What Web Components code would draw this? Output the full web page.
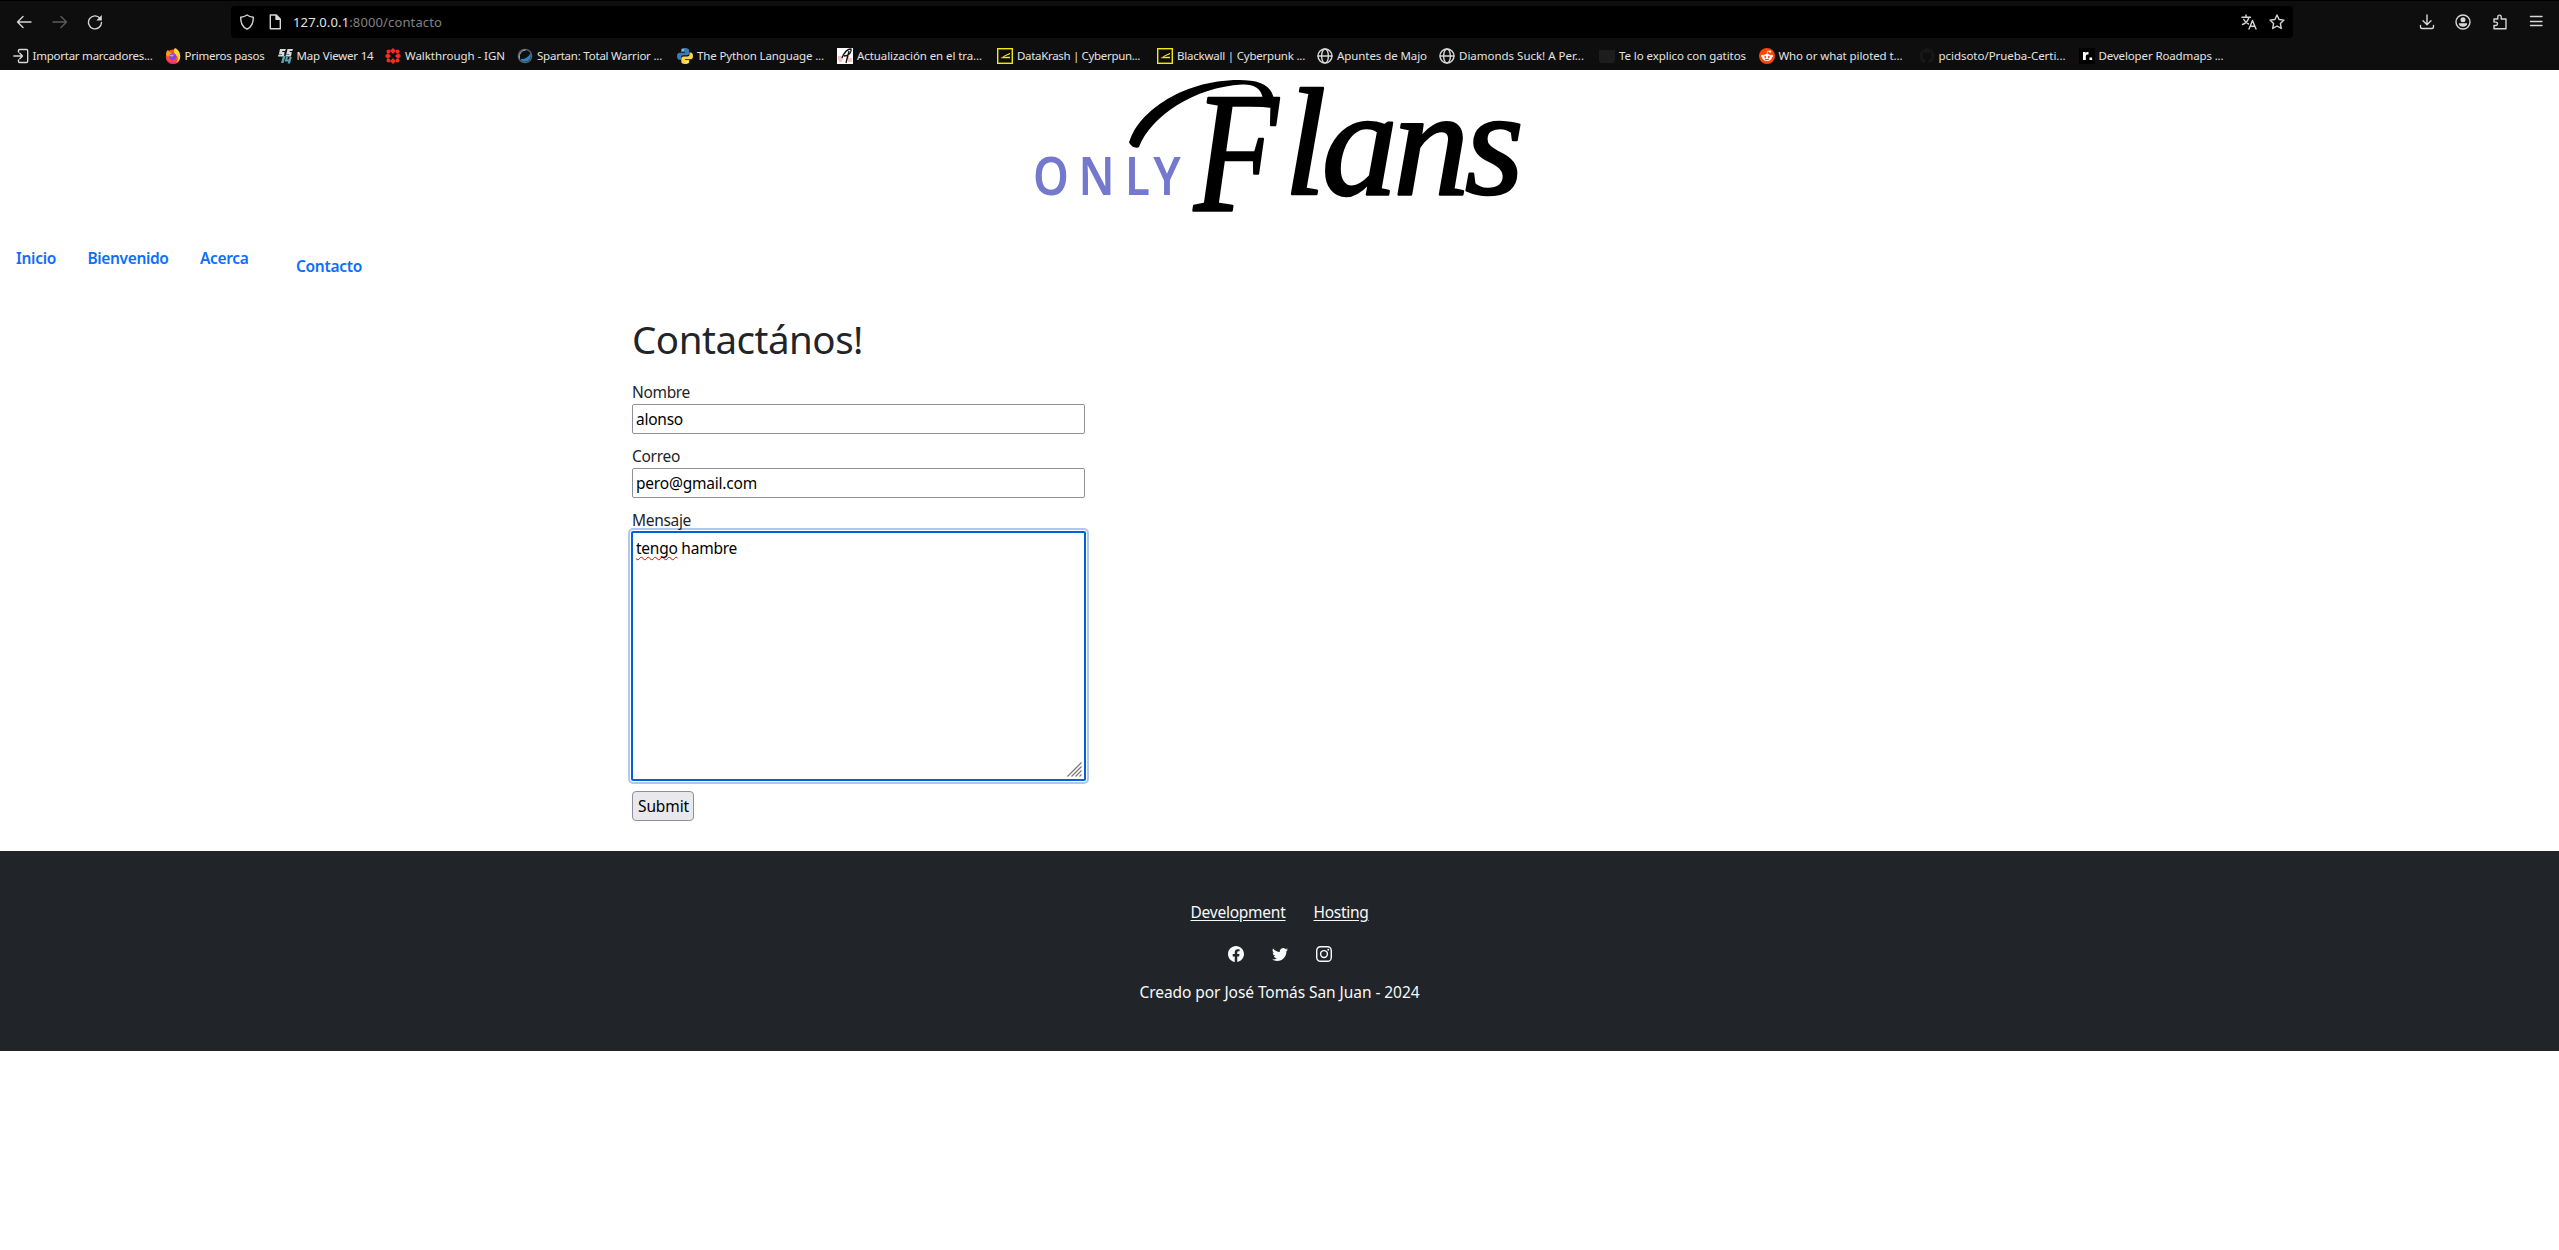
<!DOCTYPE html>
<html lang="es">
<head>
<meta charset="utf-8">
<title>OnlyFlans</title>
<style>
html,body{margin:0;background:#fff;height:100%}
body{font-family:"Noto Sans","Open Sans",sans-serif;font-size:15.5px;line-height:24px;color:#212529;overflow:hidden}
</style>
</head>
<body>
<only-flans-page></only-flans-page>
<script>
/* Text run that tracks its letters to occupy a given width. */
class FitText extends HTMLElement{
  connectedCallback(){
    if(!this.shadowRoot){
      this.attachShadow({mode:'open'}).innerHTML='<style>:host{display:inline-block;white-space:pre}</style><slot></slot>';
    }
    const w=+this.getAttribute('w'), n=[...this.textContent].length;
    this.style.letterSpacing='0';
    const nat=this.getBoundingClientRect().width;
    this.style.letterSpacing=((w-nat)/n)+'px';
    this.style.width=w+'px';
  }
}
customElements.define('fit-text',FitText);

function define(name,html){
  customElements.define(name,class extends HTMLElement{
    constructor(){super();this.attachShadow({mode:'open'}).innerHTML=html;}
  });
}

const S='fill="none" stroke="#d6d6d6" stroke-width="1.4" stroke-linecap="round" stroke-linejoin="round"';
const globe=`<g ${S}><circle cx="8" cy="8" r="7"/><ellipse cx="8" cy="8" rx="3.4" ry="7"/><path d="M1 8h14"/></g>`;
const cyber='<rect x=".7" y=".7" width="14.6" height="14.6" fill="#0c0c0c" stroke="#f5ea10" stroke-width="1.4"/><path d="M13.200 4.800 3.500 9.600h1.500L13 6.200zM5 8.800h8v1.400H4z" fill="#f5ea10"/>';
const ICONS={
back:`<path ${S} d="M15 8H1.500M7 2.500 1.500 8 7 13.500"/>`,
fwd:`<path ${S} d="M1 8h13.500M9 2.500 14.500 8 9 13.500" style="stroke:#5c5c5c"/>`,
reload:`<path ${S} d="M13 4.200A6.500 6.500 0 1 0 14.500 8.500"/><path d="M14.800 1v5.500H9.300z" fill="#d6d6d6"/>`,
shield:`<path ${S} d="M8 1C6 2.500 4 3 1.700 3.200 1.500 9 3.500 13 8 15.200 12.500 13 14.500 9 14.300 3.200 12 3 10 2.500 8 1z"/>`,
doc:`<path ${S} d="M3.300 1h6l4 4v9.800H3.300zM9 1v4.300h4.300"/><path d="M9 1v4.300h4.300z" fill="#d6d6d6"/>`,
translate:`<path ${S} d="M1 3.200h8.500M5 1v2M8 3.200C7 7 4 9.500 1.500 10.500M2.800 5.500C4 8 5.500 9 7.500 10M8 15l3.500-8.500L15 15M9.200 12.300h4.600"/>`,
star:`<path ${S} d="m8 1 2.100 4.500 4.900.600-3.600 3.400.900 4.900L8 12l-4.300 2.400.900-4.900L1 6.100l4.900-.600z"/>`,
down:`<path ${S} d="M8 1v9.500M4 6.800l4 4 4-4M1.500 11.500v1.500q0 1.500 1.500 1.500h10q1.500 0 1.500-1.500v-1.500"/>`,
user:`<circle ${S} cx="8" cy="8" r="7"/><circle cx="8" cy="5.800" r="2.500" fill="#d6d6d6"/><path d="M3.800 9.300h8.400c0 2-1.500 3.500-4.200 3.500s-4.200-1.500-4.200-3.500z" fill="#d6d6d6"/>`,
ext:`<path ${S} d="M2 5h3.800V2.800a1.700 1.700 0 0 1 3.400 0V5H14v9.800H2v-3.300h1.800a1.700 1.700 0 0 0 0-3.400H2z"/>`,
menu:`<path ${S} d="M2.500 2.500h11.500M2.500 7.500h11.500M2.500 11.500h11.500"/>`,
import:`<path ${S} d="M5.500 4V2.500Q5.500 1.500 6.500 1.500h7q1.200 0 1.200 1.200v10.600q0 1.200-1.200 1.200h-7q-1 0-1-1V12M.8 8h8.500M6.800 5.300 9.500 8 6.800 10.700"/>`,
firefox:'<circle cx="8" cy="8.800" r="7.200" fill="#ff4a36"/><path d="M2 12q6 5 12.500 0-2 4-6.500 4T2 12z" fill="#f0208c"/><path d="M10 0c4 2 6 6 5 10.500-.8 2.500-2 3.500-4 4.500 2-2 2.500-5 1-7C9.500 6 7.500 3 10 0z" fill="#ffd52e"/><path d="M1 6.500C1 4 2 3 3 1.800 4 4 5 4.500 7 5L3 9z" fill="#ff9a20"/><circle cx="7.800" cy="8.800" r="3.400" fill="#7b45e8"/><path d="M4 7.500c2-1 4-.5 5-1-.5 2-2 3-5 1z" fill="#ffa31a"/>',
map:'<path d="M3 1h6L8 3H5.500L5 4h2.500L7 8.500H1L1.500 6.500H5V6H2zM10.500 1H16l-.7 2H12.800l-.3 1h2.300L14 8.500H8.500L9 6.500h3.200V6H9.300z" fill="#d5dadc"/><path d="M6 8h2.500L6.500 15H4zM9 9h2l-.7 2.500h1.500L12.500 9h2.300L13 15.500h-2.300l.5-2H7.700z" fill="#58a5b2"/>',
ign:'<g fill="#f32b21"><path d="m8 0 3 2.800L8 6 5 2.800zM8 10l3 3.200L8 16l-3-2.800zM0 8l2.800-3L6 8l-3.200 3zM10 8l3.200-3L16 8l-2.800 3z"/><circle cx="3.500" cy="3.500" r="2"/><circle cx="12.500" cy="3.500" r="2"/><circle cx="3.500" cy="12.500" r="2"/><circle cx="12.500" cy="12.500" r="2"/></g>',
spartan:'<circle cx="8" cy="8" r="6.700" fill="#0b0f14" stroke="#59636c" stroke-width="1.300"/><path d="M3.500 11c4 .5 8-1.500 10-6 1.500 5-1.500 8.800-6 8.800-2 0-3.500-1.300-4-2.800z" fill="#2f83bd"/><path d="M2.500 10.500c-1-4 1.500-8 6-8.500" stroke="#aebbc5" fill="none"/>',
python:'<path d="M8 0C4.500 0 4 1 4 2.500V4h4.200v.8H2.500C1 4.800 0 6 0 8.200s1 3.500 2.300 3.500H4V9.500C4 8 5 7.300 6.500 7.300h3.700c1.200 0 2-.8 2-2V2.500C12.200 1 11 0 8 0z" fill="#3b7db2"/><path d="M8 16c3.500 0 4.200-1 4.200-2.500V12H8v-.7h5.700C15 11.300 16 10 16 7.900s-1-3.400-2.300-3.400h-1.200v2c0 1.300-1 2-2.200 2H6.500c-1.200 0-2.200.8-2.200 2v3C4.300 15 5 16 8 16z" fill="#fbd548"/><circle cx="6" cy="2" r=".8" fill="#fff"/><circle cx="10.200" cy="14" r=".8" fill="#fff"/>',
quill:'<path d="M0 0h16v16H0z" fill="#fff"/><path d="M1 9h4M1 11h5M2 13h3M9 11h6M9 9h3M11 13h4" stroke="#e88c8c" stroke-width="1.200"/><path d="M5 10C7 5 10 1 14 1c1 3-2 7-7 7M12 3 9 15" stroke="#111" stroke-width="1.300" fill="none"/>',
cyber, globe,
cat:'<path d="M0 1q2 2 4 1h8q2 1 4-1v11q0 3-3 3H3q-3 0-3-3z" fill="#1d1d1d"/>',
reddit:'<circle cx="8" cy="8" r="8" fill="#ff4500"/><ellipse cx="8" cy="9.500" rx="4.800" ry="3.600" fill="#fff"/><circle cx="3.300" cy="8" r="1.300" fill="#fff"/><circle cx="12.700" cy="8" r="1.300" fill="#fff"/><circle cx="11" cy="3.600" r="1.200" fill="#fff"/><path d="m8 6 .7-3 2.300.6" stroke="#fff" fill="none" stroke-width=".8"/><circle cx="6.200" cy="9" r="1" fill="#ff4500"/><circle cx="9.800" cy="9" r="1" fill="#ff4500"/><path d="M6 11q2 1.500 4 0" stroke="#333" fill="none" stroke-width=".8"/>',
github:'<circle cx="8" cy="8" r="7.800" fill="#171717"/><path d="M4 4l2 1h4l2-1v3q1 4-2.500 4.500V16h-3v-4.500Q3 11 4 7z" fill="#0d0d0d"/>',
road:'<path d="M0 0h16v16H0z" fill="#000"/><path d="M4 12V4h2.500v1Q7.500 3.800 9.500 4v2.600Q6.800 6.300 6.800 8v4zM10.500 9.400h2.600V12h-2.600z" fill="#fff"/>',
fb:'<path fill="#f8f9fa" d="M16 8.049c0-4.446-3.582-8.050-8-8.050C3.580 0-.002 3.603-.002 8.050c0 4.017 2.926 7.347 6.750 7.951v-5.625h-2.030V8.050H6.750V6.275c0-2.017 1.195-3.131 3.022-3.131.876 0 1.791.157 1.791.157v1.980h-1.009c-.993 0-1.303.621-1.303 1.258v1.510h2.218l-.354 2.326H9.250V16c3.824-.604 6.750-3.934 6.750-7.951"/>',
tw:'<path fill="#f8f9fa" d="M5.026 15c6.038 0 9.341-5.003 9.341-9.334q.002-.211-.006-.422A6.700 6.700 0 0 0 16 3.542a6.700 6.700 0 0 1-1.889.518 3.300 3.300 0 0 0 1.447-1.817 6.500 6.500 0 0 1-2.087.793A3.286 3.286 0 0 0 7.875 6.030a9.320 9.320 0 0 1-6.767-3.429 3.290 3.290 0 0 0 1.018 4.382A3.300 3.300 0 0 1 .640 6.575v.045a3.290 3.290 0 0 0 2.632 3.218 3.200 3.200 0 0 1-.865.115 3 3 0 0 1-.614-.057 3.280 3.280 0 0 0 3.067 2.277A6.600 6.600 0 0 1 .780 13.580a6 6 0 0 1-.780-.045A9.340 9.340 0 0 0 5.026 15"/>',
ig:'<g fill="none" stroke="#f8f9fa" stroke-width="1.450"><rect x=".72" y=".72" width="14.560" height="14.560" rx="3.900"/><circle cx="8" cy="8" r="3.400"/></g><circle cx="12.270" cy="3.730" r=".96" fill="#f8f9fa"/>'
};
class UiIcon extends HTMLElement{
  connectedCallback(){
    if(this.shadowRoot)return;
    const s=this.getAttribute('size')||16;
    this.attachShadow({mode:'open'}).innerHTML=`<style>:host{display:block;flex:none;width:${s}px;height:${s}px}svg{display:block}</style><svg width="${s}" height="${s}" viewBox="0 0 16 16">${ICONS[this.getAttribute('name')]}</svg>`;
  }
}
customElements.define('ui-icon',UiIcon);

define('browser-toolbar',`<style>
:host{display:flex;height:42px;align-items:center;padding:0 15px 0 16px;box-sizing:border-box}
.nav{display:flex;gap:20px;width:215px}
.nav ui-icon:last-child{margin-left:-1px}
.url{display:flex;align-items:center;width:2062px;height:32px;box-sizing:border-box;padding:0 8px;background:#000;border-radius:4px;font-size:13px;color:#e4e4e4}
.url ui-icon+ui-icon{margin-left:12px}
.url fit-text{margin-left:10px}
.dim{color:#818181}
.sp{flex:1}
.tools{display:flex;gap:20.500px;margin-left:auto}
</style>
<div class="nav"><ui-icon name="back"></ui-icon><ui-icon name="fwd"></ui-icon><ui-icon name="reload"></ui-icon></div>
<div class="url"><ui-icon name="shield"></ui-icon><ui-icon name="doc"></ui-icon><fit-text w="149">127.0.0.1<span class="dim">:8000/contacto</span></fit-text><span class="sp"></span><ui-icon name="translate"></ui-icon><ui-icon name="star"></ui-icon></div>
<div class="tools"><ui-icon name="down"></ui-icon><ui-icon name="user"></ui-icon><ui-icon name="ext"></ui-icon><ui-icon name="menu"></ui-icon></div>`);

/* icon, item pitch, label width, label */
const marks=[['import',152,120,'Importar marcadores...'],['firefox',112,80,'Primeros pasos'],['map',108.5,77,'Map Viewer 14'],['ign',132,100,'Walkthrough - IGN'],['spartan',160,125,'Spartan: Total Warrior ...'],['python',160,127,'The Python Language ...'],['quill',160,125,'Actualización en el tra...'],['cyber',160,123,'DataKrash | Cyberpun...'],['cyber',160,128,'Blackwall | Cyberpunk ...'],['globe',122,90,'Apuntes de Majo'],['globe',160,125,'Diamonds Suck! A Per...'],['cat',159.5,127,'Te lo explico con gatitos'],['reddit',160,124,'Who or what piloted t...'],['github',160,127,'pcidsoto/Prueba-Certi...'],['road',160,125,'Developer Roadmaps ...']];
define('bookmark-item',`<style>:host{display:flex;flex:none;align-items:center;gap:4px;height:16px;line-height:16px}</style><slot></slot>`);
define('bookmark-bar',`<style>:host{display:flex;padding:5px 0 0 12.500px;font-size:11.500px;color:#e2e2e2}</style>`+
 marks.map(m=>`<bookmark-item style="width:${m[1]}px"><ui-icon name="${m[0]}"></ui-icon><fit-text w="${m[2]}">${m[3]}</fit-text></bookmark-item>`).join(''));
define('browser-chrome',`<style>:host{display:block;height:70px;box-sizing:border-box;background:#0e0e0e;border-top:1px solid #000}</style>
<browser-toolbar></browser-toolbar><bookmark-bar></bookmark-bar>`);

define('site-logo',`<style>:host{display:block;height:150px}svg{display:block;margin:0 auto;overflow:visible}
.only{font:600 53px "Noto Sans","Open Sans",sans-serif;fill:#7479cd}
.flans{font-family:"Liberation Serif",serif;font-style:italic;font-weight:400;fill:#000;stroke:#000;stroke-width:2.500;stroke-linejoin:round}</style>
<svg width="520" height="150" viewBox="0 0 520 150" role="img" aria-label="Only Flans">
<text class="only" y="125" x="15 68 122 155" transform="scale(.86 1)">ONLY</text>
<path d="M109 74C115 45 160 10 219 10 240 10 252 15 254 30L243 30C242 17 232 14 222 14.500 175 17 131 46 119 77 117 79 109 77 109 70z"/>
<text class="flans" transform="translate(174 141) scale(.8 1)" font-size="172">F</text>
<text class="flans" x="264" y="124" font-size="152" textLength="240">lans</text>
</svg>`);

define('site-nav',`<style>:host{display:flex;height:60px;padding-left:16px;color:#0d6efd;font-weight:600;font-size:15.500px}
fit-text{margin:26px 31.500px 0 0}fit-text.active{margin:34px 0 0 16px}</style>
<fit-text w="40">Inicio</fit-text><fit-text w="81">Bienvenido</fit-text><fit-text w="48.500">Acerca</fit-text><fit-text class="active" w="66">Contacto</fit-text>`);

define('form-field',`<style>:host{display:block;margin-bottom:10px}.l{height:24px}.box{height:30px;box-sizing:border-box;border:1px solid #8f8f9d;border-radius:2px;padding:2px 3px;color:#000}</style>
<div class="l"><slot name="label"></slot></div><div class="box"><slot></slot></div>`);
define('message-field',`<style>:host{display:block}.l{height:23px}
.box{display:flex;justify-content:space-between;height:250px;margin:0 -1px;box-sizing:border-box;border:2px solid #0060df;border-radius:2px;background:#fff;box-shadow:0 0 0 1px #fff,0 0 0 3px #b0c8ee;padding:3px 2px 2px 3px;color:#000}
svg{align-self:flex-end}</style>
<div class="l"><slot name="label"></slot></div><div class="box"><div><slot></slot></div>
<svg width="15" height="15" viewBox="0 0 15 15" stroke="#777" stroke-width="1.200"><path d="M.5 14.500l14-14M4.500 14.500l10-10M8.500 14.500l6-6M12.500 14.500l2-2"/></svg></div>`);
define('submit-button',`<style>:host{display:block;width:62px;height:30px;box-sizing:border-box;border:1px solid #8f8f9d;border-radius:4px;background:#e9e9ed;color:#000;padding:2px 5px;margin-top:10px}</style><slot></slot>`);
define('contact-form',`<style>:host{display:block;width:453px;margin-left:632px;height:571px;box-sizing:border-box;padding-top:35px}
h1{margin:0 0 17px;font-size:38.500px;line-height:48px;font-weight:400}
.sp{text-decoration:underline wavy #e00 1px;text-underline-offset:2px;text-decoration-skip-ink:none}</style>
<h1><fit-text w="231">Contactános!</fit-text></h1>
<form-field><fit-text slot="label" w="58">Nombre</fit-text><fit-text w="47">alonso</fit-text></form-field>
<form-field><fit-text slot="label" w="48">Correo</fit-text><fit-text w="121">pero@gmail.com</fit-text></form-field>
<message-field><fit-text slot="label" w="59">Mensaje</fit-text><fit-text w="101"><span class="sp">tengo</span> hambre</fit-text></message-field>
<submit-button><fit-text w="51">Submit</fit-text></submit-button>`);

define('site-footer',`<style>:host{display:flex;flex-direction:column;align-items:center;height:200px;box-sizing:border-box;background:#212529;color:#f8f9fa;padding-top:49px}
.links{display:flex;gap:28px;height:24px}.links fit-text{text-decoration:underline;text-underline-offset:2px}
.social{display:flex;gap:28px;margin:22px 0 18px}</style>
<div class="links"><fit-text w="95">Development</fit-text><fit-text w="55">Hosting</fit-text></div>
<div class="social"><ui-icon name="fb"></ui-icon><ui-icon name="tw"></ui-icon><ui-icon name="ig"></ui-icon></div>
<fit-text w="280">Creado por José Tomás San Juan - 2024</fit-text>`);

define('only-flans-page',`<style>:host{display:block}</style><browser-chrome></browser-chrome><site-logo></site-logo><site-nav></site-nav><contact-form></contact-form><site-footer></site-footer>`);
</script>
</body>
</html>
